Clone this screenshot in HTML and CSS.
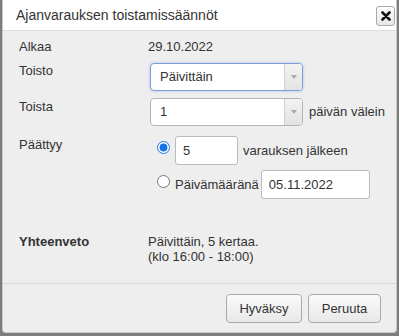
FILE: index.html
```html
<!DOCTYPE html>
<html lang="fi">
<head>
<meta charset="utf-8">
<title>Ajanvarauksen toistamissäännöt</title>
<link rel="stylesheet" href="styles.css">
</head>
<body>
<div class="dialog">
  <div class="titlebar">
    <span class="title">Ajanvarauksen toistamissäännöt</span>
    <button class="close" type="button" aria-label="Sulje">
      <svg width="10" height="10" viewBox="0 0 10 10"><path d="M1.5 1.5 L8.5 8.5 M8.5 1.5 L1.5 8.5" stroke="#111" stroke-width="2.6" stroke-linecap="round"/></svg>
    </button>
  </div>
  <div class="content">
    <div class="row r-alkaa">
      <div class="label">Alkaa</div>
      <div class="value">29.10.2022</div>
    </div>
    <div class="row r-toisto">
      <div class="label">Toisto</div>
      <div class="value">
        <div class="select focused"><span class="sel-text">Päivittäin</span><span class="sel-arrow"><span class="tri"></span></span></div>
      </div>
    </div>
    <div class="row r-toista">
      <div class="label">Toista</div>
      <div class="value inline">
        <div class="select"><span class="sel-text">1</span><span class="sel-arrow"><span class="tri"></span></span></div>
        <span class="after">päivän välein</span>
      </div>
    </div>
    <div class="row r-paattyy">
      <div class="label">Päättyy</div>
      <div class="value ends">
        <div class="opt">
          <input type="radio" name="end" checked>
          <input class="field f-count" type="text" value="5">
          <span class="after">varauksen jälkeen</span>
        </div>
        <div class="opt">
          <input type="radio" name="end">
          <span class="opt-label">Päivämääränä</span>
          <input class="field f-date" type="text" value="05.11.2022">
        </div>
      </div>
    </div>
    <div class="row r-summary">
      <div class="label bold">Yhteenveto</div>
      <div class="value summary">Päivittäin, 5 kertaa.<br>(klo 16:00 - 18:00)</div>
    </div>
  </div>
  <div class="footer">
    <button class="btn" type="button">Hyväksy</button>
    <button class="btn" type="button">Peruuta</button>
  </div>
</div>
</body>
</html>
```
FILE: styles.css
```css
html, body {
  margin: 0;
  padding: 0;
}
body {
  width: 399px;
  height: 336px;
  overflow: hidden;
  background: #7d7d7d;
  font-family: "Liberation Sans", Arial, sans-serif;
  font-size: 13px;
  color: #333;
}
.dialog {
  margin-left: 2px;
  width: 393px;
  height: 332px;
  background: #eeeeee;
  border: 1px solid #c8c8c8;
  border-top: none;
  border-radius: 0 0 4px 4px;
  display: flex;
  flex-direction: column;
  overflow: hidden;
}
.titlebar {
  height: 30px;
  background: #fff;
  border-bottom: 1px solid #dcdcdc;
  display: flex;
  align-items: center;
  justify-content: space-between;
  padding: 0 1px 0 13px;
  flex: none;
}
.title {
  font-size: 14px;
  color: #333;
}
.close {
  width: 19px;
  height: 20px;
  margin-top: 1px;
  padding: 0;
  border: 1px solid #aaa;
  border-radius: 3px;
  background: linear-gradient(#fdfdfd, #e6e6e6);
  display: flex;
  align-items: center;
  justify-content: center;
}
.content {
  flex: 1;
  padding: 8px 0 0 16px;
}
.row {
  display: grid;
  grid-template-columns: 129px 1fr;
  align-items: start;
}
.label {
  line-height: 16px;
}
.bold {
  font-weight: bold;
}
.value {
  line-height: 16px;
}
.r-alkaa { height: 24px; }
.r-toisto { height: 35px; }
.r-toista { height: 39px; }
.r-toista .label { padding-top: 1px; }
.inline {
  display: flex;
  align-items: center;
  gap: 6px;
}
.select {
  width: 151px;
  height: 26px;
  margin-left: 2px;
  border: 1px solid #b5b5b5;
  border-radius: 4px;
  background: #fff;
  display: flex;
  overflow: hidden;
}
.select.focused {
  border-color: #7d9fd8;
  box-shadow: 0 0 3px rgba(90, 140, 220, 0.45);
}
.sel-text {
  flex: 1;
  padding-left: 9px;
  line-height: 26px;
  color: #333;
}
.sel-arrow {
  width: 17px;
  border-left: 1px solid #cfcfcf;
  background: linear-gradient(#f2f2f2, #e3e3e3);
  display: flex;
  align-items: center;
  justify-content: center;
}
.tri {
  width: 0;
  height: 0;
  border-left: 3px solid transparent;
  border-right: 3px solid transparent;
  border-top: 4px solid #aaa;
}
.r-paattyy { height: 97px; }
.r-paattyy .label { padding-top: 0; }
.ends {
  display: flex;
  flex-direction: column;
  gap: 5px;
  margin-top: -1px;
}
.opt {
  display: flex;
  align-items: center;
  padding-left: 9px;
}
.opt input[type="radio"] {
  margin: -6px 5px 0 0;
  width: 13px;
  height: 13px;
  accent-color: #1a73e8;
}
.opt .after {
  margin-left: 5px;
}
.opt-label {
  margin-right: 2px;
}
.field {
  height: 29px;
  box-sizing: border-box;
  border: 1px solid #bbb;
  border-radius: 3px;
  background: #fff;
  font-family: "Liberation Sans", Arial, sans-serif;
  font-size: 13px;
  color: #333;
  padding: 0 7px;
  outline: none;
}
.f-count { width: 63px; }
.f-date { width: 109px; }
.r-summary .label, .r-summary .value {
  line-height: 15px;
}
.footer {
  flex: none;
  height: 49px;
  border-top: 1px solid #d8d8d8;
  display: flex;
  justify-content: flex-end;
  align-items: flex-start;
  gap: 6px;
  padding: 10px 15px 0 0;
  box-sizing: border-box;
}
.btn {
  height: 29px;
  padding: 0;
  border: 1px solid #aaa;
  border-radius: 4px;
  background: linear-gradient(#fafafa, #e8e8e8);
  font-family: "Liberation Sans", Arial, sans-serif;
  font-size: 13px;
  color: #333;
}
.btn:first-child { width: 76px; }
.btn:last-child { width: 73px; }
```
